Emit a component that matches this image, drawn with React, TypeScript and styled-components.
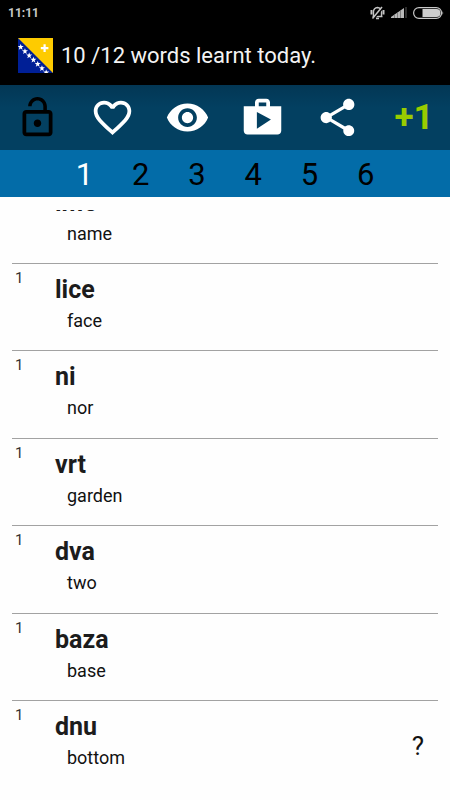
import React, { useState } from "react";
import styled, { createGlobalStyle } from "styled-components";

const GlobalStyle = createGlobalStyle`
  * { box-sizing: border-box; }
  body {
    margin: 0;
    background: #fefefe;
    font-family: Roboto, "Noto Sans", sans-serif;
    color: #111;
  }
`;

const Screen = styled.main`
  display: flex;
  flex-direction: column;
  height: 100vh;
  overflow: hidden;
`;

const StatusBar = styled.div`
  display: flex;
  align-items: center;
  justify-content: space-between;
  height: 25px;
  padding: 0 6px 0 8px;
  background: #000;
  color: #c8c8c8;
  font-size: 12px;
  font-weight: 700;
`;

const StatusIcons = styled.div`
  display: flex;
  align-items: center;
  gap: 6px;
  svg { display: block; }
`;

const TitleBar = styled.header`
  display: flex;
  align-items: center;
  gap: 8px;
  height: 60px;
  padding: 0 18px;
  background: #000;
  color: #f3f3f3;
  svg { display: block; flex: none; }
`;

const Title = styled.h1`
  margin: 0;
  padding-top: 2px;
  font-size: 22px;
  line-height: 28px;
  font-weight: 400;
`;

const Toolbar = styled.div`
  display: grid;
  grid-template-columns: repeat(6, 1fr);
  height: 65px;
  background: linear-gradient(#033755, #034061 35%, #034061);
`;

const ToolButton = styled.button<{ $color?: string }>`
  display: flex;
  align-items: center;
  justify-content: center;
  padding: 0;
  border: 0;
  background: none;
  color: ${(p) => p.$color ?? "#fff"};
  cursor: pointer;
  svg { display: block; }
`;

const PlusOneButton = styled(ToolButton)`
  padding-left: 3px;
  font: 700 35px/45px Roboto, sans-serif;
`;

const Levels = styled.nav`
  display: grid;
  grid-template-columns: repeat(8, 1fr);
  flex: none;
  height: 47px;
  background: #036ca8;
`;

const LevelButton = styled.button<{ $active: boolean }>`
  padding: 3px 0 0;
  border: 0;
  background: none;
  color: ${(p) => (p.$active ? "#fff" : "#000")};
  font: 400 31px/36px Roboto, sans-serif;
  cursor: pointer;
  &:first-child { grid-column-start: 2; }
`;

const ListView = styled.section`
  display: flex;
  flex: 1;
  flex-direction: column;
  justify-content: flex-end;
  min-height: 0;
  margin: 13px 12px 12px;
  overflow: hidden;
`;

const WordList = styled.ul`
  flex: none;
  margin: 0;
  padding: 0;
  list-style: none;
`;

const WordRow = styled.li`
  display: grid;
  grid-template-columns: 43px 1fr auto;
  min-height: 88px;
  border-top: 1px solid #a2a2a2;
  &:first-child,
  &:nth-child(even) { min-height: 87px; }
`;

const Level = styled.span`
  padding: 5px 0 0 3px;
  color: #333;
  font-size: 15px;
  line-height: 18px;
`;

const Entry = styled.div`
  padding-top: 11px;
`;

const Word = styled.div`
  color: #1c1c1c;
  font-size: 25px;
  font-weight: 700;
  line-height: 30px;
`;

const Meaning = styled.div`
  padding: 4px 0 0 12px;
  font-size: 18px;
  line-height: 24px;
`;

const Hint = styled.button`
  align-self: center;
  padding: 2px 14px 0 0;
  border: 0;
  background: none;
  color: #111;
  font: 400 26px/30px Roboto, sans-serif;
  cursor: pointer;
`;

const STAR = "M0-3 .8-.9 3-.9 1.2.5 1.9 2.7 0 1.4-1.9 2.7-1.2.5-3-.9-.8-.9Z";
const STARS = [0, 1, 2, 3, 4, 5, 6].map((i) => [2.7 + i * 4.25, 9 + i * 4.25]);

function Flag() {
  return (
    <svg width="35" height="35" viewBox="0 0 35 35" role="img" aria-label="Bosnian flag">
      <rect width="35" height="35" fill="#001f96" />
      <path d="M0 0H35V35Z" fill="#fecb00" />
      {STARS.map(([x, y]) => (
        <path key={x} d={STAR} transform={`translate(${x} ${y})`} fill="#fff" />
      ))}
      <path d="M25.5 6.3h2.200v2.700h2.700v2.200h-2.700v2.700h-2.200v-2.700h-2.700V9h2.700z" fill="#fff" />
    </svg>
  );
}

function MutedBell() {
  return (
    <svg width="15" height="14" viewBox="0.500 0 15 14" fill="none" stroke="#c4c4c4">
      <path d="M3 10.500h10M4 10V5.500Q4.300 2 8 1.500q3.700.5 4 4V10M6.500 12.500h3" strokeWidth="1.400" />
      <path d="M2 4v4.500M14 4v4.500" strokeWidth="2" />
      <path d="M4.500 12.500 13.500 2" stroke="#000" strokeWidth="1.500" />
      <path d="M3 12.500 12.500 1" strokeWidth="1.500" />
    </svg>
  );
}

function Signal() {
  return (
    <svg width="16" height="11" viewBox="0 0 16 11">
      <path d="M0 11V10L13 1V11Z" fill="#b9b9b9" />
      <path d="M3.500 7v4M6.500 5v6M9.500 3v8" stroke="#666" strokeWidth=".7" />
      <path d="M14 0h2v11h-2z" fill="#2c2c2c" />
    </svg>
  );
}

function Battery() {
  return (
    <svg width="31" height="12" viewBox="0 0 31 12">
      <rect x=".6" y=".6" width="28" height="10.800" rx="5.400" fill="none" stroke="#c8c8c8" strokeWidth="1.200" />
      <path d="M9.500 2H23.500a4 4 0 0 1 0 8H9.500Z" fill="#cfcfcf" />
      <path d="M29.500 4q1.500 2 0 4Z" fill="#c8c8c8" />
    </svg>
  );
}

const TOOLS = [
  {
    label: "Unlock",
    color: "#000",
    d: "M12 17c1.100 0 2-.9 2-2s-.9-2-2-2-2 .9-2 2 .9 2 2 2zm6-9h-1V6c0-2.760-2.240-5-5-5S7 3.240 7 6h1.900c0-1.710 1.390-3.100 3.100-3.100s3.100 1.390 3.100 3.100v2H6c-1.100 0-2 .9-2 2v10c0 1.100.9 2 2 2h12c1.100 0 2-.9 2-2V10c0-1.100-.9-2-2-2zm0 12H6V10h12v10z",
  },
  {
    label: "Favourites",
    d: "M16.500 3c-1.740 0-3.410.81-4.500 2.090C10.910 3.810 9.240 3 7.500 3 4.420 3 2 5.420 2 8.500c0 3.780 3.400 6.860 8.550 11.540L12 21.350l1.450-1.320C18.600 15.360 22 12.280 22 8.500 22 5.420 19.580 3 16.500 3zm-4.400 15.550l-.1.100-.1-.1C7.140 14.240 4 11.390 4 8.500 4 6.500 5.500 5 7.500 5c1.540 0 3.040.99 3.570 2.360h1.870C13.460 5.990 14.960 5 16.500 5c2 0 3.500 1.500 3.500 3.500 0 2.890-3.140 5.740-7.900 10.050z",
  },
  {
    label: "Show translations",
    d: "M12 4.500C7 4.500 2.730 7.610 1 12c1.730 4.390 6 7.500 11 7.500s9.270-3.110 11-7.500c-1.730-4.390-6-7.500-11-7.500zM12 17c-2.760 0-5-2.240-5-5s2.240-5 5-5 5 2.240 5 5-2.240 5-5 5zm0-8c-1.660 0-3 1.340-3 3s1.340 3 3 3 3-1.340 3-3-1.340-3-3-3z",
  },
  {
    label: "Shop",
    d: "M16 6V4c0-1.110-.89-2-2-2h-4c-1.110 0-2 .89-2 2v2H2v13c0 1.110.89 2 2 2h16c1.110 0 2-.89 2-2V6h-6zm-6-2h4v2h-4V4zM9 18V9l7.500 4L9 18z",
  },
  {
    label: "Share",
    d: "M18 16.080c-.76 0-1.440.3-1.960.77L8.910 12.700c.05-.23.09-.46.09-.7s-.04-.47-.09-.7l7.050-4.110c.54.5 1.250.81 2.040.81 1.660 0 3-1.340 3-3s-1.340-3-3-3-3 1.340-3 3c0 .24.04.47.09.7L8.040 9.810C7.500 9.310 6.790 9 6 9c-1.660 0-3 1.340-3 3s1.340 3 3 3c.79 0 1.500-.31 2.040-.81l7.120 4.160c-.05.21-.08.43-.08.65 0 1.610 1.310 2.920 2.920 2.920 1.610 0 2.920-1.310 2.920-2.920s-1.310-2.920-2.920-2.920z",
  },
];

const WORDS = [
  ["ime", "name"],
  ["lice", "face"],
  ["ni", "nor"],
  ["vrt", "garden"],
  ["dva", "two"],
  ["baza", "base"],
  ["dnu", "bottom"],
];

export default function App() {
  const [level, setLevel] = useState(1);
  return (
    <>
      <GlobalStyle />
      <Screen>
        <StatusBar>
          <span>11:11</span>
          <StatusIcons>
            <MutedBell />
            <Signal />
            <Battery />
          </StatusIcons>
        </StatusBar>
        <TitleBar>
          <Flag />
          <Title>10 /12 words learnt today.</Title>
        </TitleBar>
        <Toolbar>
          {TOOLS.map((tool) => (
            <ToolButton key={tool.label} $color={tool.color} aria-label={tool.label}>
              <svg width="45" height="45" viewBox="0 0 24 24" fill="currentColor">
                <path d={tool.d} />
              </svg>
            </ToolButton>
          ))}
          <PlusOneButton $color="#99cc00">+1</PlusOneButton>
        </Toolbar>
        <Levels>
          {[1, 2, 3, 4, 5, 6].map((n) => (
            <LevelButton key={n} $active={n === level} onClick={() => setLevel(n)}>
              {n}
            </LevelButton>
          ))}
        </Levels>
        <ListView>
          <WordList>
            {WORDS.map(([word, meaning], i) => (
              <WordRow key={word}>
                <Level>1</Level>
                <Entry>
                  <Word>{word}</Word>
                  <Meaning>{meaning}</Meaning>
                </Entry>
                {i === WORDS.length - 1 && <Hint aria-label="Show hint">?</Hint>}
              </WordRow>
            ))}
          </WordList>
        </ListView>
      </Screen>
    </>
  );
}
